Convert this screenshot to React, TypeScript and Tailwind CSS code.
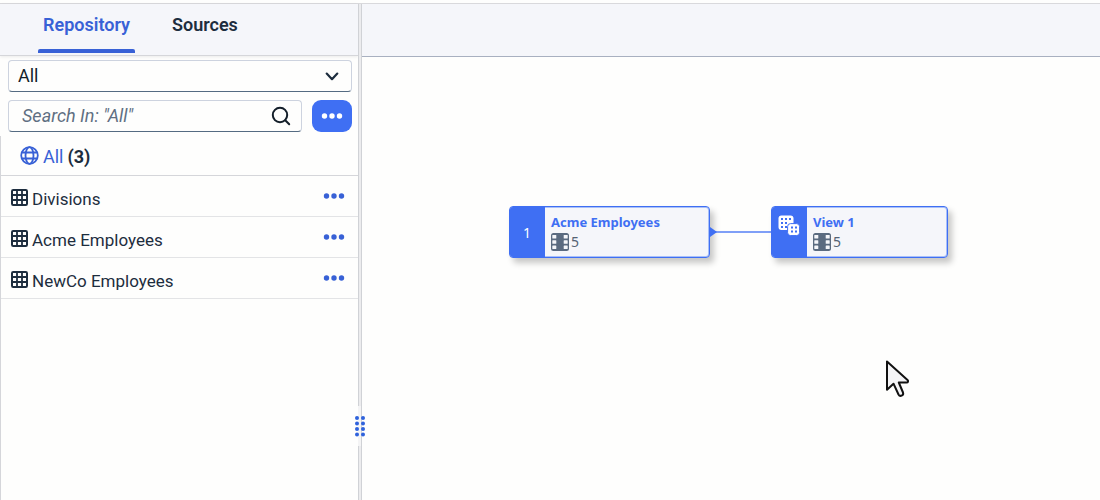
import type { ReactNode } from "react";

const tables = ["Divisions", "Acme Employees", "NewCo Employees"];

function Dots({ className }: { className: string }) {
  return (
    <svg viewBox="0 0 22 6" className={className} fill="currentColor" aria-hidden="true">
      <circle cx="3.5" cy="3" r="2.7" />
      <circle cx="11" cy="3" r="2.7" />
      <circle cx="18.5" cy="3" r="2.7" />
    </svg>
  );
}

function TableIcon() {
  return (
    <svg viewBox="0 0 17 17" className="h-[17px] w-[17px] shrink-0" fill="none" stroke="currentColor" aria-hidden="true">
      <rect x="1" y="1" width="15" height="15" rx="1.2" strokeWidth="2" />
      <path d="M6 1v15M11 1v15M1 6h15M1 11h15" strokeWidth="1.8" />
    </svg>
  );
}

function GlobeIcon() {
  return (
    <svg viewBox="0 0 19 19" className="h-[19px] w-[19px] shrink-0" fill="none" stroke="currentColor" strokeWidth="1.8" aria-hidden="true">
      <circle cx="9.5" cy="9.5" r="8.3" />
      <ellipse cx="9.5" cy="9.5" rx="4" ry="8.3" />
      <path d="M1.8 6.5h15.4M1.8 12.5h15.4" />
    </svg>
  );
}

function ColumnsIcon() {
  return (
    <svg viewBox="0 0 18 18" className="h-[18px] w-[18px] shrink-0" aria-hidden="true">
      <rect width="18" height="18" rx="2.5" fill="#5b6b80" />
      <g fill="#f5f6fa">
        <rect x="1.3" y="2" width="4" height="3.6" rx="0.6" />
        <rect x="1.3" y="7.2" width="4" height="3.6" rx="0.6" />
        <rect x="1.3" y="12.4" width="4" height="3.6" rx="0.6" />
        <rect x="12.7" y="2" width="4" height="3.6" rx="0.6" />
        <rect x="12.7" y="7.2" width="4" height="3.6" rx="0.6" />
        <rect x="12.7" y="12.4" width="4" height="3.6" rx="0.6" />
      </g>
    </svg>
  );
}

function ViewIcon() {
  return (
    <svg viewBox="0 0 22 21" className="h-[21px] w-[22px]" aria-hidden="true">
      <rect x="0.5" y="0.5" width="15" height="14.5" rx="3" fill="#fff" />
      <g fill="#3f6ff3">
        <rect x="3" y="3" width="2" height="2" />
        <rect x="7" y="3" width="2" height="2" />
        <rect x="11" y="3" width="2" height="2" />
        <rect x="3" y="7" width="2" height="2" />
        <rect x="7" y="7" width="2" height="2" />
        <rect x="3" y="11" width="2" height="2" />
        <rect x="7" y="11" width="2" height="2" />
      </g>
      <rect x="9.6" y="8.6" width="12" height="12" rx="3" fill="#fff" stroke="#3f6ff3" strokeWidth="1" />
      <g fill="#3f6ff3">
        <rect x="13" y="11.5" width="2" height="2" />
        <rect x="17" y="11.5" width="2" height="2" />
        <rect x="13" y="15.5" width="2" height="2" />
        <rect x="17" y="15.5" width="2" height="2" />
      </g>
    </svg>
  );
}

function Node({ title, badge, className }: { title: string; badge: ReactNode; className: string }) {
  return (
    <article
      className={`absolute flex h-[52px] overflow-hidden rounded-[4px] border border-[#3f6ff3] bg-[#f5f6fa] shadow-[4px_5px_6px_rgba(0,0,0,0.22)] inset-ring inset-ring-[#a9c0f9] ${className}`}
    >
      <div className="-m-px mr-0 flex w-9 shrink-0 justify-center bg-[#3f6ff3] text-white">{badge}</div>
      <div className="flex flex-col pt-[5px] pl-1.5">
        <h2 className="text-[13px] leading-5 font-bold text-[#3f6ff3]">{title}</h2>
        <p className="flex items-center gap-0.5 text-[14px] leading-5 text-[#556374]">
          <ColumnsIcon />5
        </p>
      </div>
    </article>
  );
}

export default function App() {
  return (
    <div className="flex h-screen flex-col bg-[#fefefd] font-['Noto_Sans','Open_Sans',sans-serif] text-[#1d2d3e]">
      <div className="h-1 shrink-0 border-b border-[#d9d9dc]" />
      <div className="flex min-h-0 flex-1">
        <aside className="flex w-[358px] shrink-0 flex-col font-['Roboto','Noto_Sans',sans-serif]">
          <div role="tablist" className="flex h-[52px] shrink-0 gap-[33px] border-b border-[#d5d6da] bg-[#f5f6fa] pl-[38px] shadow-[0_1px_3px_rgba(0,0,0,0.08)]">
            <button role="tab" aria-selected="true" className="flex h-[49px] w-[97px] flex-col items-center justify-between pt-[9px] text-[18px] leading-6 font-semibold text-[#3861d6]">
              Repository
              <span className="h-1 w-full rounded-t-[2px] bg-[#3861d6]" />
            </button>
            <button role="tab" aria-selected="false" className="flex h-[49px] items-start px-1 pt-[9px] text-[18px] leading-6 font-semibold">
              Sources
            </button>
          </div>

          <div className="flex shrink-0 flex-col gap-2 pt-1 pr-1.5 pl-2">
            <div className="relative flex h-8">
              <select aria-label="Category" className="w-full appearance-none rounded-[4px] border border-[#cdd3df] border-b-[#556b82] bg-[#fefefd] pb-0.5 pl-[9px] text-[18px] text-[#131e29]">
                <option>All</option>
              </select>
              <svg viewBox="0 0 14 9" className="pointer-events-none absolute top-3 right-[13px] h-[9px] w-[14px]" fill="none" stroke="currentColor" strokeWidth="2.2" strokeLinecap="round" strokeLinejoin="round" aria-hidden="true">
                <path d="M1.7 1.6 7 7.2l5.3-5.6" />
              </svg>
            </div>
            <div className="flex h-8 gap-2.5">
              <div className="flex min-w-0 flex-1 items-center rounded-[4px] border border-[#cdd3df] border-b-[#556b82] pr-2.5 pl-[13px]">
                <input type="text" aria-label="Search" placeholder={'Search In: "All"'} className="min-w-0 flex-1 bg-transparent text-[18px] leading-6 italic outline-none placeholder:text-[#5f6f82]" />
                <button aria-label="Start search" className="text-[#131e29]">
                  <svg viewBox="0 0 20 20" className="h-5 w-5" fill="none" stroke="currentColor" strokeWidth="2" strokeLinecap="round" aria-hidden="true">
                    <circle cx="9" cy="9" r="7.2" />
                    <path d="m14.2 14.2 4 4" />
                  </svg>
                </button>
              </div>
              <button aria-label="More options" className="flex w-10 items-center justify-center rounded-[9px] bg-[#3f6ff3] text-white">
                <Dots className="h-1.5 w-[22px]" />
              </button>
            </div>
          </div>

          <nav aria-label="Repository objects" className="mt-1 flex min-h-0 flex-1 flex-col border-l border-[#d5d6da]">
            <div className="flex h-10 shrink-0 items-center gap-1 border-b border-[#d5d6da] pl-[19px] text-[18px] leading-6">
              <span className="flex items-center gap-1 text-[#3861d6]">
                <GlobeIcon />
                <a href="#all" className="pt-0.5">All</a>
              </span>
              <span className="pt-0.5 font-bold">(3)</span>
            </div>
            <ul>
              {tables.map((name) => (
                <li key={name} className="flex h-[41px] items-center border-b border-[#e3e4e6] pt-[3px] pr-[13px] pl-2.5 text-[17px] leading-6">
                  <TableIcon />
                  <span className="flex-1 pt-0.5 pl-1">{name}</span>
                  <button aria-label={`Actions for ${name}`} className="pb-[3px] text-[#3861d6]">
                    <Dots className="h-1.5 w-[22px]" />
                  </button>
                </li>
              ))}
            </ul>
          </nav>
        </aside>

        <div role="separator" aria-orientation="vertical" className="relative w-1 shrink-0 border-x border-[#d0d2d6] bg-[#ececee]">
          <svg viewBox="0 0 12 60" className="absolute top-[392px] -left-[5px] h-[60px] w-3" aria-hidden="true">
            <path d="M4 10h3v40H4z" fill="#f4f4f5" />
            <g fill="#2f62dc">
              {[22, 27.5, 33, 38.5].map((y) => (
                <g key={y}>
                  <circle cx="3" cy={y} r="2" />
                  <circle cx="9" cy={y} r="2" />
                </g>
              ))}
            </g>
          </svg>
        </div>

        <main className="flex min-w-0 flex-1 flex-col">
          <div className="h-[53px] shrink-0 border-b border-[#a8b0c0] bg-[#f5f6fa]" />
          <section aria-label="Diagram" className="relative flex-1 overflow-hidden">
            <Node title="Acme Employees" className="top-[149px] left-[147px] w-[201px]" badge={<span className="self-center text-[14px]">1</span>} />
            <svg viewBox="0 0 62 14" className="absolute top-[168px] left-[348px] h-3.5 w-[62px]" aria-hidden="true">
              <path d="M4 7h58" stroke="#7f9ff7" strokeWidth="2" />
              <path d="M0 2v10l7-5z" fill="#3f6ff3" />
            </svg>
            <Node title="View 1" className="top-[149px] left-[409px] w-[177px]" badge={<span className="pt-[9px]"><ViewIcon /></span>} />
            <svg viewBox="0 0 24 38" className="absolute top-[303px] left-[524px] h-[38px] w-6" aria-hidden="true">
              <path d="M1 1.5v28.2l6.5-6 5 10.8c1.5 2.6 5.5 1 4.5-2L12.8 22.5H20.5c1.7 0 2-1.5 1-2.6z" fill="#f4f4f6" stroke="#111" strokeWidth="2" strokeLinejoin="round" />
            </svg>
          </section>
        </main>
      </div>
    </div>
  );
}
